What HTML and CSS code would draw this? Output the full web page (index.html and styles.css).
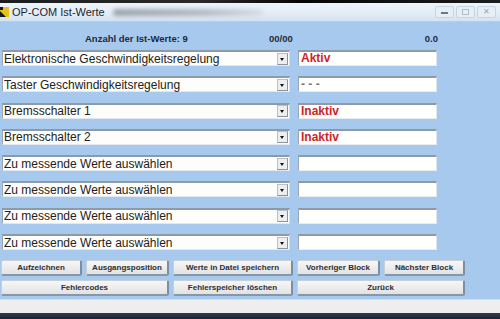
FILE: index.html
```html
<!DOCTYPE html>
<html>
  <head>
    <meta charset="utf-8">
    <link rel="stylesheet" href="styles.css">
  </head>
  <body>
    <div class="window">
      <div class="top-strip"></div>
      <div class="titlebar">
        <svg class="app-icon" width="9" height="10" viewBox="0 0 9 10">
          <rect x="0" y="0" width="9" height="10" fill="#e8c21a"/>
          <path d="M0 10 L0 4 L6 10 Z" fill="#1a1a1a"/>
          <rect x="0" y="0" width="3" height="3" fill="#1a1a1a"/>
        </svg>
        <span class="title">OP-COM Ist-Werte</span>
        <div class="title-blur"></div>
        <div class="controls">
          <span class="ctl ctl-min"></span>
          <span class="ctl ctl-max"></span>
          <span class="ctl ctl-close">✕</span>
        </div>
      </div>

      <div class="client">
        <div class="header">
          <span class="count">Anzahl der Ist-Werte: 9</span>
          <span class="block">00/00</span>
          <span class="time">0.0</span>
        </div>

        <div class="rows">
          <div class="row">
            <div class="combo"><span>Elektronische Geschwindigkeitsregelung</span><i class="arrow"></i></div>
            <div class="value red">Aktiv</div>
          </div>
          <div class="row">
            <div class="combo"><span>Taster Geschwindigkeitsregelung</span><i class="arrow"></i></div>
            <div class="value grey">- - -</div>
          </div>
          <div class="row">
            <div class="combo"><span>Bremsschalter 1</span><i class="arrow"></i></div>
            <div class="value red">Inaktiv</div>
          </div>
          <div class="row">
            <div class="combo"><span>Bremsschalter 2</span><i class="arrow"></i></div>
            <div class="value red">Inaktiv</div>
          </div>
          <div class="row">
            <div class="combo"><span>Zu messende Werte auswählen</span><i class="arrow"></i></div>
            <div class="value"></div>
          </div>
          <div class="row">
            <div class="combo"><span>Zu messende Werte auswählen</span><i class="arrow"></i></div>
            <div class="value"></div>
          </div>
          <div class="row">
            <div class="combo"><span>Zu messende Werte auswählen</span><i class="arrow"></i></div>
            <div class="value"></div>
          </div>
          <div class="row">
            <div class="combo"><span>Zu messende Werte auswählen</span><i class="arrow"></i></div>
            <div class="value"></div>
          </div>
        </div>

        <div class="buttons">
          <button class="btn">Aufzeichnen</button>
          <button class="btn">Ausgangsposition</button>
          <button class="btn">Werte in Datei speichern</button>
          <button class="btn">Vorheriger Block</button>
          <button class="btn">Nächster Block</button>
          <button class="btn span2">Fehlercodes</button>
          <button class="btn">Fehlerspeicher löschen</button>
          <button class="btn span2">Zurück</button>
        </div>
      </div>

      <div class="statusbar"></div>
      <div class="taskbar"></div>
    </div>
  </body>
</html>
```

FILE: styles.css
```css
html, body {
    margin: 0;
    padding: 0;
}

body {
    width: 500px;
    height: 319px;
    overflow: hidden;
    font-family: "Liberation Sans", Arial, sans-serif;
    background: #a7c9ee;
}

.window {
    display: flex;
    flex-direction: column;
    height: 319px;
}

.window > div {
    flex: none;
}

.top-strip {
    height: 3px;
    background: linear-gradient(90deg, #1b1d1f 0%, #2a2a2a 40%, #050505 60%, #1b1d1f 100%);
}

.titlebar {
    height: 19px;
    display: flex;
    align-items: center;
    background: linear-gradient(180deg, #eef4fa 0%, #e2ecf6 60%, #d3e2f1 100%);
    border-bottom: 1px solid #b9cde2;
    box-sizing: border-box;
}

.app-icon {
    flex: none;
    margin-right: 3px;
}

.title {
    font-size: 11px;
    color: #1c2430;
    white-space: nowrap;
}

.title-blur {
    width: 150px;
    height: 7px;
    margin-left: 8px;
    border-radius: 4px;
    background: linear-gradient(90deg, #7d858f, #9ea6b0 60%, #d0d9e2);
    filter: blur(2px);
    opacity: 0.7;
}

.controls {
    margin-left: auto;
    margin-right: 4px;
    display: flex;
    gap: 2px;
}

.ctl {
    width: 17px;
    height: 10px;
    border: 1px solid #c9d4df;
    border-radius: 2px;
    background: #e6eef6;
    position: relative;
    font-size: 8px;
    line-height: 10px;
    text-align: center;
    color: #9aa5b0;
}

.ctl-min::after {
    content: "";
    position: absolute;
    left: 5px;
    top: 5px;
    width: 7px;
    height: 2px;
    background: #6d7884;
}

.ctl-max::after {
    content: "";
    position: absolute;
    left: 5px;
    top: 2px;
    width: 5px;
    height: 4px;
    border: 1px solid #b0bcc8;
}

.client {
    height: 277px;
    display: flex;
    flex-direction: column;
    padding-left: 1px;
}

.header {
    height: 28px;
    display: flex;
    align-items: center;
    padding-top: 4px;
    box-sizing: border-box;
    font-size: 9.5px;
    font-weight: bold;
    color: #1e2a3a;
}

.count {
    width: 290px;
    padding-left: 84px;
    box-sizing: border-box;
}

.block {
    margin-left: -22px;
}

.time {
    margin-left: 132px;
}

.rows {
    display: flex;
    flex-direction: column;
    gap: 10.3px;
}

.row {
    display: flex;
    gap: 8px;
    height: 16px;
    padding-left: 1px;
}

.combo {
    width: 288px;
    box-sizing: border-box;
    display: flex;
    align-items: center;
    background: #fdfdfb;
    border-top: 2px solid #8e9aa6;
    border-left: 1px solid #9aa6b2;
    border-bottom: 1px solid #e3e8ee;
    border-right: 1px solid #d8dfe6;
    font-size: 12px;
    color: #222;
    padding-left: 1px;
}

.combo span {
    flex: 1;
    white-space: nowrap;
}

.arrow {
    width: 9px;
    height: 10px;
    margin-right: 1px;
    background: #eceef0;
    border: 1px solid #b8c0c8;
    border-right-color: #8b939b;
    border-bottom-color: #8b939b;
    position: relative;
}

.arrow::after {
    content: "";
    position: absolute;
    left: 2px;
    top: 4px;
    border-left: 2.5px solid transparent;
    border-right: 2.5px solid transparent;
    border-top: 3px solid #111;
}

.value {
    width: 139px;
    box-sizing: border-box;
    background: #fffffd;
    border-top: 2px solid #8e9aa6;
    border-left: 1px solid #9aa6b2;
    border-bottom: 1px solid #e8ecef;
    border-right: 1px solid #e0e5ea;
    padding-left: 2px;
    font-size: 12px;
    line-height: 13px;
}

.value.red {
    color: #cf2424;
    font-weight: bold;
}

.value.grey {
    color: #777;
    font-weight: bold;
}

.buttons {
    margin-top: 10px;
    display: grid;
    grid-template-columns: 81px 83px 120px 83px 81px;
    grid-auto-rows: 16px;
    column-gap: 4px;
    row-gap: 4px;
}

.btn {
    margin: 0;
    padding: 0;
    font-family: "Liberation Sans", Arial, sans-serif;
    font-size: 8px;
    font-weight: bold;
    color: #2a2e34;
    background: linear-gradient(180deg, #f6f6f6 0%, #ececec 55%, #e2e2e2 100%);
    border: 1px solid #c9cfd6;
    border-right: 2px solid #7d8ea3;
    border-bottom: 2px solid #8797aa;
    border-radius: 2px;
}

.span2 {
    grid-column: span 2;
}

.statusbar {
    height: 14px;
    box-sizing: border-box;
    background: #edeeed;
    border-top: 1px solid #d9dcdf;
}

.taskbar {
    height: 6px;
    background: linear-gradient(180deg, #2e3e52, #1a2433);
}
```
